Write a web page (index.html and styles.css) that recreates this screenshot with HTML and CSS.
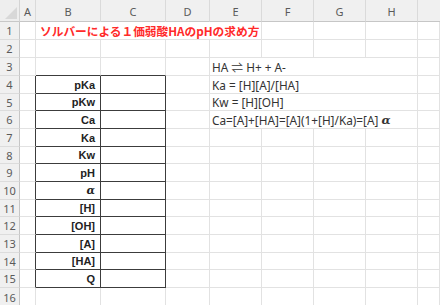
FILE: index.html
```html
<!DOCTYPE html>
<html lang="ja">
<head>
<meta charset="utf-8">
<link rel="stylesheet" href="styles.css">
</head>
<body>
<div class="sheet">
  <div class="corner"><span class="tri"></span></div>
  <div class="ch">A</div><div class="ch">B</div><div class="ch">C</div><div class="ch">D</div><div class="ch">E</div><div class="ch">F</div><div class="ch">G</div><div class="ch">H</div><div class="ch last"></div>

  <div class="rh">1</div><div class="c"></div><div class="c title s4">ソルバーによる１価弱酸HAのpHの求め方</div><div class="c"></div><div class="c"></div><div class="c"></div><div class="c"></div>

  <div class="rh">2</div><div class="c"></div><div class="c"></div><div class="c"></div><div class="c"></div><div class="c"></div><div class="c"></div><div class="c"></div><div class="c"></div><div class="c"></div>

  <div class="rh">3</div><div class="c"></div><div class="c tb"></div><div class="c tb"></div><div class="c"></div><div class="c note s4">HA ⇌ H+ + A-</div><div class="c"></div>

  <div class="rh">4</div><div class="c tl"></div><div class="c lab">pKa</div><div class="c val"></div><div class="c"></div><div class="c note s4">Ka = [H][A]/[HA]</div><div class="c"></div>
  <div class="rh">5</div><div class="c tl"></div><div class="c lab">pKw</div><div class="c val"></div><div class="c"></div><div class="c note s4">Kw = [H][OH]</div><div class="c"></div>
  <div class="rh">6</div><div class="c tl"></div><div class="c lab">Ca</div><div class="c val"></div><div class="c"></div><div class="c note s4">Ca=[A]+[HA]=[A](1+[H]/Ka)=[A]&nbsp;<b class="alpha">α</b></div><div class="c"></div>
  <div class="rh">7</div><div class="c tl"></div><div class="c lab">Ka</div><div class="c val"></div><div class="c"></div><div class="c"></div><div class="c"></div><div class="c"></div><div class="c"></div><div class="c"></div>
  <div class="rh">8</div><div class="c tl"></div><div class="c lab">Kw</div><div class="c val"></div><div class="c"></div><div class="c"></div><div class="c"></div><div class="c"></div><div class="c"></div><div class="c"></div>
  <div class="rh">9</div><div class="c tl"></div><div class="c lab">pH</div><div class="c val"></div><div class="c"></div><div class="c"></div><div class="c"></div><div class="c"></div><div class="c"></div><div class="c"></div>
  <div class="rh">10</div><div class="c tl"></div><div class="c lab"><span class="alpha">α</span></div><div class="c val"></div><div class="c"></div><div class="c"></div><div class="c"></div><div class="c"></div><div class="c"></div><div class="c"></div>
  <div class="rh">11</div><div class="c tl"></div><div class="c lab">[H]</div><div class="c val"></div><div class="c"></div><div class="c"></div><div class="c"></div><div class="c"></div><div class="c"></div><div class="c"></div>
  <div class="rh">12</div><div class="c tl"></div><div class="c lab">[OH]</div><div class="c val"></div><div class="c"></div><div class="c"></div><div class="c"></div><div class="c"></div><div class="c"></div><div class="c"></div>
  <div class="rh">13</div><div class="c tl"></div><div class="c lab">[A]</div><div class="c val"></div><div class="c"></div><div class="c"></div><div class="c"></div><div class="c"></div><div class="c"></div><div class="c"></div>
  <div class="rh">14</div><div class="c tl"></div><div class="c lab">[HA]</div><div class="c val"></div><div class="c"></div><div class="c"></div><div class="c"></div><div class="c"></div><div class="c"></div><div class="c"></div>
  <div class="rh">15</div><div class="c tl"></div><div class="c lab">Q</div><div class="c val"></div><div class="c"></div><div class="c"></div><div class="c"></div><div class="c"></div><div class="c"></div><div class="c"></div>
  <div class="rh">16</div><div class="c"></div><div class="c"></div><div class="c"></div><div class="c"></div><div class="c"></div><div class="c"></div><div class="c"></div><div class="c"></div><div class="c"></div>
</div>
</body>
</html>
```
FILE: styles.css
```css
html, body {
  margin: 0;
  padding: 0;
  background: #fff;
  overflow: hidden;
}
.sheet {
  display: grid;
  width: 440px;
  height: 305px;
  overflow: hidden;
  grid-template-columns: 20px 16px 65px 65px 44px 52px 52px 52px 52px 22px;
  grid-template-rows: 22px 18px 18px 18px 18px 17px 18px 18px 17px 18px 18px 17px 18px 18px 17px 18px 20px;
  font-family: "Noto Sans", "Noto Sans CJK JP", sans-serif;
  color: #262626;
}
.sheet > div {
  box-sizing: border-box;
  min-width: 0;
}
.corner {
  background: #eeeeee;
  border-right: 1px solid #d4d4d4;
  border-bottom: 1px solid #c8c8c8;
  position: relative;
}
.tri {
  position: absolute;
  right: 2px;
  bottom: 2px;
  width: 0;
  height: 0;
  border-left: 12px solid transparent;
  border-bottom: 12px solid #d8d8d8;
}
.ch {
  background: #f0f0f0;
  border-right: 1px solid #dadada;
  border-bottom: 1px solid #c6c6c6;
  color: #5a5a5a;
  font-size: 11px;
  display: flex;
  align-items: center;
  justify-content: center;
  padding-top: 1px;
}
.ch.last {
  border-right: none;
}
.rh {
  background: #f0f0f0;
  border-right: 1px solid #c6c6c6;
  border-bottom: 1px solid #dcdcdc;
  color: #5a5a5a;
  font-size: 11px;
  display: flex;
  align-items: center;
  justify-content: center;
}
.c {
  border-right: 1px solid #e2e2e2;
  border-bottom: 1px solid #e2e2e2;
  font-size: 11px;
  display: flex;
  align-items: center;
  white-space: nowrap;
}
.s4 {
  grid-column: span 4;
}
.title {
  color: #ff2a2a;
  font-weight: bold;
  font-size: 11.7px;
  padding-left: 4px;
  font-family: "Noto Sans CJK JP", sans-serif;
}
.note {
  padding-left: 2px;
  color: #333;
  font-size: 11.8px;
}
.tb {
  border-bottom: 1px solid #3c3c3c;
}
.tl {
  border-right: 1px solid #3c3c3c;
}
.lab {
  justify-content: flex-end;
  padding-right: 5px;
  font-weight: bold;
  font-family: "Liberation Sans", sans-serif;
  color: #222;
  border-right: 1px solid #3c3c3c;
  border-bottom: 1px solid #3c3c3c;
}
.val {
  border-right: 1px solid #3c3c3c;
  border-bottom: 1px solid #3c3c3c;
}
.alpha {
  font-weight: bold;
  font-style: italic;
  font-family: "DejaVu Serif", serif;
}
```
